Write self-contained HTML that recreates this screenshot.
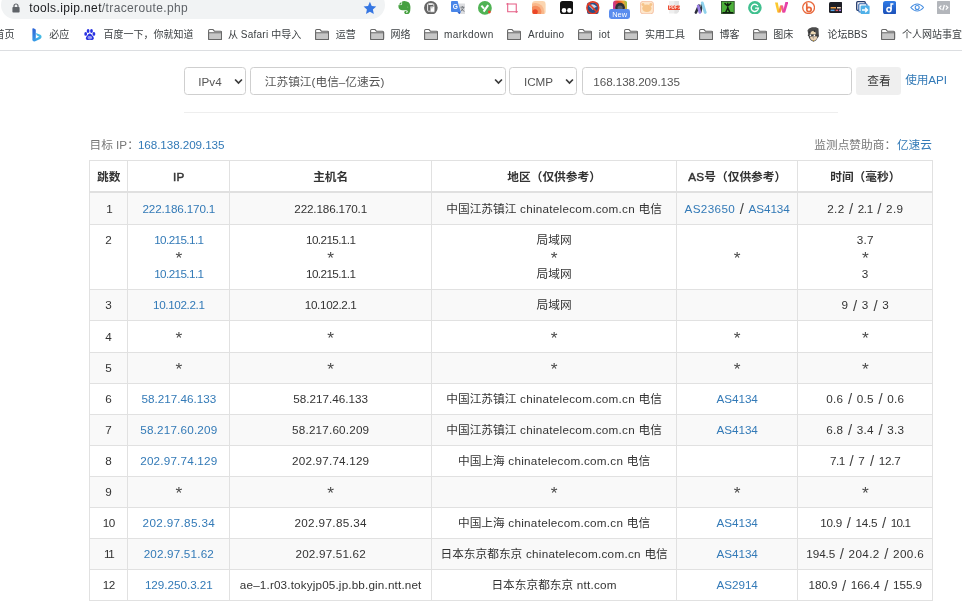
<!DOCTYPE html>
<html lang="zh-CN"><head><meta charset="utf-8"><title>Traceroute</title>
<style>
*{box-sizing:border-box;margin:0;padding:0}
html,body{width:962px;height:601px;overflow:hidden;background:#fff}
body{position:relative;will-change:transform;font-family:"Liberation Sans","Noto Sans CJK SC",sans-serif;color:#333;font-size:11.7px}
.abs{position:absolute}
a{color:#337ab7;text-decoration:none}
/* chrome */
#omni{position:absolute;left:0.6px;top:-9.4px;width:384.6px;height:28.5px;border-radius:14.25px;background:#f1f3f4}
#url{position:absolute;left:29.3px;top:-0.4px;font-size:12px;line-height:16px;color:#5f6368;white-space:nowrap;letter-spacing:0.37px}
#url b{font-weight:normal;color:#202124}
.bm{position:absolute;top:27px;height:16px;line-height:16px;font-size:10px;color:#3c4043;white-space:nowrap}
.fold{position:absolute;top:28.7px;width:14.2px;height:11.2px}
#bbar{position:absolute;left:0;top:49.6px;width:962px;height:1px;background:#dcdee1}
.ext{position:absolute;top:2px;width:15px;height:15px}
/* form */
.ctl{position:absolute;top:66.6px;height:28.4px;border:0.9px solid #cfcfcf;border-radius:3.5px;background:#fff;color:#555;font-size:11.7px;line-height:28px;white-space:nowrap}
.chev{position:absolute;top:10.2px;width:9px;height:7px}
#btn{position:absolute;left:856.3px;top:66.6px;width:45.2px;height:28.4px;border-radius:3.3px;background:#efefef;color:#333;text-align:center;line-height:27px;font-size:11.7px}
#hr{position:absolute;left:183.7px;top:112px;width:654.5px;height:1px;background:#eee}
/* table */
table{position:absolute;left:89px;top:160px;border-collapse:collapse;table-layout:fixed;width:843.4px}
td,th{border:1px solid #e1e1e1;text-align:center;vertical-align:top;font-size:11.7px;line-height:16.7px;padding:7.1px 0 0;white-space:nowrap;overflow:hidden;word-spacing:1.35px}
td.c{word-spacing:0.35px}
th{padding-top:7.9px}
th i{font-style:normal;font-weight:normal;-webkit-text-stroke:0.45px #333;letter-spacing:0.3px}
tr.f td{padding-top:8.1px}
th{font-weight:bold;border-bottom:2px solid #e0e0e0}
tr.s td{background:#f9f9f9}
.sl{font-size:14.9px;line-height:0;position:relative;top:1.2px;color:#444}
.ast{font-size:17.4px;line-height:0;position:relative;top:3px;color:#4a4a4a}
</style></head>
<body>
<div id="omni"></div>
<svg class="abs" style="left:12px;top:2.5px;width:8px;height:10px" viewBox="0 0 8 10"><path d="M2 4.2 V3 a2 2 0 0 1 4 0 V4.2" fill="none" stroke="#5f6368" stroke-width="1.2"/><rect x="0.4" y="4" width="7.2" height="5.6" rx="0.8" fill="#5f6368"/></svg>
<div id="url"><b>tools.ipip.net</b>/traceroute.php</div>
<svg class="abs" style="left:362.8px;top:0.8px;width:13.8px;height:13.8px" viewBox="0 0 24 24"><path d="M12 1.5 L15.2 8.6 L23 9.4 L17.2 14.7 L18.8 22.4 L12 18.5 L5.2 22.4 L6.8 14.7 L1 9.4 L8.8 8.6 Z" fill="#3676e2"/></svg>
<svg class="abs" style="left:397.5px;top:0.8px;width:13px;height:13.6px" viewBox="0 0 13 13.6"><path d="M6.2 0 Q8 0 8.7 0.5 Q11 1 11.6 2.5 Q12.6 5 12.4 7.5 Q12.4 10.4 11.6 11.7 Q10.6 13.4 8.7 13.3 Q6.4 13.2 6.2 11.6 Q6.1 10.4 7.4 10 Q8.6 9.8 9 10.7 Q8.4 10.5 8 10.9 Q7.7 11.5 8.5 11.7 Q9.8 11.7 9.8 10.2 Q9.6 9.2 7.6 9.2 Q6.6 9.3 5.75 9.2 Q3 9.6 1.6 8.3 Q0.3 7 0.3 4.2 L3.2 4.1 Q4.1 4 4.1 3 L4.1 0.6 Q5 0 6.2 0 Z" fill="#46a040"/><path d="M0.7 3.5 L3.4 0.8 L3.4 2.9 Q3.4 3.5 2.8 3.5 Z" fill="#46a040"/><path d="M9 5.9 Q9.8 5.5 10.4 6.3 Q9.6 6.5 9 5.9Z" fill="#cfe8cc"/></svg>
<svg class="abs" style="left:424px;top:0.7px;width:13.7px;height:13.7px" viewBox="0 0 13.7 13.7"><circle cx="6.85" cy="6.85" r="6.85" fill="#666"/><rect x="3.6" y="3" width="6.2" height="7.2" rx="0.7" fill="none" stroke="#fff" stroke-width="0.9"/><rect x="4.8" y="2.4" width="3.8" height="1.3" rx="0.3" fill="#fff"/><rect x="6.2" y="5.3" width="4.5" height="5.9" rx="0.4" fill="#fff" stroke="#666" stroke-width="0.5"/><path d="M7.2 6.8 H8.6" stroke="#666" stroke-width="0.6"/></svg>
<svg class="abs" style="left:450.8px;top:0.9px;width:14.4px;height:13.6px" viewBox="0 0 14.4 13.6"><rect x="7.6" y="2.6" width="6.6" height="10.4" rx="0.8" fill="#dcdde0"/><path d="M9.4 6.2 H13.4 M11.4 5.2 V6.2 M12.8 6.2 Q12 9 9.6 10.4 M10.2 7.4 Q11.2 9.4 13.4 10.4" stroke="#5f6368" stroke-width="0.8" fill="none"/><path d="M1 0 H6.6 L9.8 11 H1 Q0 11 0 10 V1 Q0 0 1 0 Z" fill="#4a86e8"/><path d="M6.4 11 L8.4 13.4 L9.8 11 Z" fill="#2f62c9"/><text x="1.7" y="8" font-family="Liberation Sans,sans-serif" font-weight="bold" font-size="6.6" fill="#fff">G</text></svg>
<svg class="abs" style="left:478.3px;top:0.8px;width:13.8px;height:13.8px" viewBox="0 0 13.8 13.8"><circle cx="6.9" cy="6.9" r="6.9" fill="#50b354"/><path d="M3.4 4.6 L6 7.6 M10.2 4.2 L5.6 10.6" stroke="#fff" stroke-width="2.1" fill="none"/><circle cx="11.4" cy="11" r="1.4" fill="#e8452c"/></svg>
<svg class="abs" style="left:506px;top:1.5px;width:12px;height:12px" viewBox="0 0 12 12"><path d="M1.7 0.9 V9.75 H11.9 M0.25 2 H10.25 V11" stroke="#e55c84" stroke-width="1.05" fill="none"/></svg>
<svg class="abs" style="left:532px;top:0.8px;width:13.8px;height:13.6px" viewBox="0 0 13.8 13.6"><defs><clipPath id="oc"><rect width="13.8" height="13.6" rx="3.4"/></clipPath></defs><g clip-path="url(#oc)"><rect width="13.8" height="13.6" fill="#fbd5b0"/><circle cx="3.6" cy="10.6" r="8.6" fill="#f9b88c"/><circle cx="3.6" cy="10.6" r="5.8" fill="#f58e5e"/><circle cx="3.2" cy="10.8" r="2.6" fill="#ea4628"/></g></svg>
<svg class="abs" style="left:559.5px;top:1.2px;width:13.4px;height:13.2px" viewBox="0 0 13.4 13.2"><rect width="13.4" height="13.2" rx="2.6" fill="#111"/><circle cx="4" cy="9.4" r="2.3" fill="#fff"/><circle cx="9.4" cy="9.4" r="2.3" fill="#fff"/></svg>
<svg class="abs" style="left:586px;top:0.8px;width:13.6px;height:13.6px" viewBox="0 0 13.6 13.6"><rect x="1" y="1.6" width="11.6" height="11.4" rx="2" fill="#2b4f86"/><path d="M3 5 Q7 1 11 6 Q8 6 7 9 Q5 7 3 5Z" fill="#c9d6ea"/><circle cx="6.8" cy="6.8" r="5.9" fill="none" stroke="#e23b24" stroke-width="1.6"/><path d="M2.6 2.6 L11 11" stroke="#e23b24" stroke-width="1.6"/></svg>
<svg class="abs" style="left:613.3px;top:0px;width:14.2px;height:10px" viewBox="0 0 14.2 10"><defs><linearGradient id="ig" x1="0" y1="0.7" x2="1" y2="0.5"><stop offset="0" stop-color="#c23ab8"/><stop offset="0.45" stop-color="#e8402a"/><stop offset="0.8" stop-color="#f0a030"/><stop offset="1" stop-color="#9ac04a"/></linearGradient></defs><rect x="0" y="0.4" width="14.2" height="13" rx="3" fill="url(#ig)"/><circle cx="7.1" cy="7.6" r="4.8" fill="#2e3138"/><circle cx="7.1" cy="8" r="2.6" fill="#5a5f68"/></svg>
<div class="abs" style="left:609.1px;top:8.9px;width:21px;height:10px;border-radius:2.4px;background:#5a8dee;color:#fff;font-size:7.4px;line-height:11.4px;text-align:center">New</div>
<svg class="abs" style="left:640px;top:1px;width:13.8px;height:13.2px" viewBox="0 0 13.8 13.2"><rect x="0.4" y="0.4" width="13" height="12.4" rx="2.6" fill="#fde7cd" stroke="#f4b99a" stroke-width="0.8"/><ellipse cx="6.9" cy="7.2" rx="4.6" ry="3.8" fill="#f6c48a"/><circle cx="3" cy="3.4" r="1.5" fill="#f6c48a"/><circle cx="10.8" cy="3.4" r="1.5" fill="#f6c48a"/></svg>
<svg class="abs" style="left:667.6px;top:0.8px;width:12.6px;height:12.8px" viewBox="0 0 12.6 12.8"><path d="M1 0 H11 V10.6 L9 12.6 H1 Z" fill="#efefef"/><path d="M6.4 0 H11 V10.6 L9 12.6 H6.4 Z" fill="#e3e3e3"/><rect x="0" y="4.2" width="12.6" height="4.9" rx="0.8" fill="#ea4a30"/><text x="0.7" y="8.3" font-family="Liberation Sans,sans-serif" font-weight="bold" font-size="4.6" fill="#fde3dc" letter-spacing="-0.2">PDF 2U</text></svg>
<svg class="abs" style="left:694.2px;top:0.7px;width:14px;height:13.4px" viewBox="0 0 14 13.4"><path d="M1.9 11.6 L5 4.6" stroke="#2b2d3a" stroke-width="2.6" stroke-linecap="round"/><path d="M6.4 10.8 L8 3.6" stroke="#2b2d3a" stroke-width="2.4" stroke-linecap="round"/><path d="M4.2 5 L5.9 11.4" stroke="#9a80e4" stroke-width="2.8" stroke-linecap="round"/><path d="M8.3 2 L11.2 11.4" stroke="#8fd2ec" stroke-width="2.9" stroke-linecap="round"/></svg>
<svg class="abs" style="left:721px;top:1.2px;width:13.6px;height:12.8px" viewBox="0 0 13.6 12.8"><rect x="0.4" y="0.4" width="12.8" height="12" fill="#4cb03a" stroke="#2d4f2a" stroke-width="0.9"/><path d="M6.8 2.2 L6.8 7 M4 2.6 L6.8 5 L9.8 2.2 M6.8 7 L4.6 11.6 M6.8 7 L9 11.6 M2 11.8 H11.6" stroke="#10200f" stroke-width="1.5" fill="none" stroke-linecap="round"/></svg>
<svg class="abs" style="left:748px;top:0.8px;width:13.8px;height:13.6px" viewBox="0 0 13.8 13.6"><circle cx="6.9" cy="6.8" r="6.8" fill="#40c08f"/><path d="M9.6 4.6 A3.6 3.6 0 1 0 10.4 7.2 H7.6" stroke="#fff" stroke-width="1.35" fill="none" stroke-linecap="round"/></svg>
<svg class="abs" style="left:775px;top:2px;width:13.4px;height:11px" viewBox="0 0 13.4 11"><path d="M0 0.6 H2.8 L4.6 10.6 H2.4 Z" fill="#fbc92e"/><path d="M5 3.4 H7.6 L5.6 10.6 H3.2 Z" fill="#f7953a"/><path d="M5.6 3.4 H8 L9.6 10.6 H7.2 Z" fill="#f25d8f"/><path d="M10.4 0 H13.4 L10.2 10.6 H7.8 Z" fill="#e640a8"/></svg>
<svg class="abs" style="left:802px;top:1px;width:13.2px;height:13.2px" viewBox="0 0 13.2 13.2"><circle cx="6.6" cy="6.6" r="5.9" fill="#fff" stroke="#e8683c" stroke-width="1.3"/><path d="M4.8 2.8 V8.4 Q4.8 10.6 7 10.6 Q9.2 10.6 9.2 8.4 Q9.2 6.4 7 6.4 Q5.6 6.4 4.9 7.4" stroke="#e8683c" stroke-width="1.7" fill="none" stroke-linecap="round"/></svg>
<svg class="abs" style="left:828.8px;top:2px;width:13.6px;height:11px" viewBox="0 0 13.6 11"><rect width="13.6" height="11" rx="1.6" fill="#1d1e25"/><rect x="1.6" y="5" width="5.4" height="1.5" fill="#f0a04b"/><rect x="8" y="5" width="3.8" height="1.5" fill="#f0d9c0"/><rect x="1.6" y="7.6" width="4" height="1.5" fill="#58a6e8"/><rect x="6.6" y="7.6" width="2.6" height="1.5" fill="#d65a5a"/><rect x="10" y="7.6" width="2" height="1.5" fill="#a777e0"/></svg>
<svg class="abs" style="left:856.4px;top:1px;width:13.8px;height:13.4px" viewBox="0 0 13.8 13.4"><rect x="0.7" y="0.7" width="8.6" height="8.6" rx="1" fill="#fff" stroke="#243b6b" stroke-width="1.3"/><rect x="2.8" y="2.8" width="8.2" height="8.2" rx="1" fill="#fff" stroke="#2d5fa8" stroke-width="1.1"/><rect x="4.6" y="4.6" width="9" height="8.6" rx="1.2" fill="#4fb0e8"/><path d="M6 9 H11 M9.2 6.8 L11.4 9 L9.2 11.2" stroke="#fff" stroke-width="1.5" fill="none"/></svg>
<svg class="abs" style="left:883px;top:1px;width:13.4px;height:13.4px" viewBox="0 0 13.4 13.4"><defs><linearGradient id="dg" x1="0" y1="0" x2="0" y2="1"><stop offset="0" stop-color="#2f7be6"/><stop offset="1" stop-color="#1c50b8"/></linearGradient></defs><rect width="13.4" height="13.4" rx="2.6" fill="url(#dg)"/><circle cx="6" cy="8.6" r="2.1" fill="none" stroke="#fff" stroke-width="1.5"/><path d="M8.1 8.6 V3 H10.4" stroke="#fff" stroke-width="1.5" fill="none"/></svg>
<svg class="abs" style="left:909.6px;top:3.4px;width:14.4px;height:9px" viewBox="0 0 14.4 9"><path d="M0.8 4.5 Q7.2 -2.6 13.6 4.5 Q7.2 11.6 0.8 4.5 Z" fill="#fff" stroke="#4a90e2" stroke-width="1.1"/><circle cx="7.2" cy="4.5" r="2" fill="none" stroke="#4a90e2" stroke-width="1.1"/></svg>
<svg class="abs" style="left:937px;top:1px;width:13.2px;height:13.2px" viewBox="0 0 13.2 13.2"><rect width="13.2" height="13.2" rx="0.8" fill="#b3b6bb"/><path d="M4.4 4.6 L2.4 6.6 L4.4 8.6 M8.8 4.6 L10.8 6.6 L8.8 8.6 M7.4 4 L5.8 9.2" stroke="#fff" stroke-width="1.3" fill="none"/></svg>
<svg class="abs" style="left:31.5px;top:28px;width:10px;height:13.6px" viewBox="0 0 10 13.6"><defs><linearGradient id="bg1" x1="0" y1="0" x2="0" y2="1"><stop offset="0" stop-color="#2c63d6"/><stop offset="1" stop-color="#3a9be8"/></linearGradient><linearGradient id="bg2" x1="0" y1="1" x2="1" y2="0"><stop offset="0" stop-color="#2f8fe6"/><stop offset="1" stop-color="#4cc9e4"/></linearGradient></defs><path d="M3.8 5 L8.4 6.8 Q9.8 7.5 9.6 9 Q9.4 10.2 8.2 10.9 L3.2 13.3 Q1.6 13.8 0.5 12.4 L3.8 10.6 L6.6 9 Q7 8.5 6.4 8 L4.9 7.4 Z" fill="url(#bg2)"/><path d="M0.4 1 Q0.4 0 1.4 0.3 L3 0.9 Q3.8 1.2 3.8 2 V10.8 L1.8 12.8 Q0.4 13 0.4 11.6 Z" fill="url(#bg1)"/></svg>
<svg class="abs" style="left:84.2px;top:28.6px;width:11.4px;height:11.4px" viewBox="0 0 11.4 11.4"><ellipse cx="1.7" cy="4.9" rx="1.4" ry="1.9" fill="#2932e1"/><ellipse cx="4.1" cy="2" rx="1.4" ry="1.9" fill="#2932e1"/><ellipse cx="7.5" cy="2" rx="1.4" ry="1.9" fill="#2932e1"/><ellipse cx="9.9" cy="4.9" rx="1.4" ry="1.9" fill="#2932e1"/><path d="M5.8 4.6 Q7.2 4.6 8.2 6.4 Q10.2 8 9.8 9.8 Q9.4 11.2 7.6 11 Q5.8 10.6 4 11 Q2 11.2 1.8 9.6 Q1.6 8 3.4 6.4 Q4.4 4.6 5.8 4.6Z" fill="#2932e1"/><rect x="3.8" y="7.6" width="4" height="2" rx="0.6" fill="#fff"/><path d="M4.6 8 V9.2 M5.8 8 V9.2 M7 8 V9.2" stroke="#2932e1" stroke-width="0.6"/></svg>
<svg class="abs" style="left:807.1px;top:27.1px;width:12px;height:15px" viewBox="0 0 12 15"><path d="M0.5 3.2 L2 1.5 L5 0.2 H9 L11.5 1.5 L11.9 9.5 L10.6 11 L9 13.6 L6.5 14.8 L4 13.6 L2 11 L1.4 8 Z" fill="#4c4c4c"/><path d="M3.4 7.4 Q3.4 4.4 6 4 Q8.4 4.2 8.8 6 L8.6 7.4 Z" fill="#ead6b2"/><path d="M3 9.8 Q6 9 10.2 9.4 L9.8 11.2 L8.6 13 L6.6 13.9 L4.6 13 L3.4 11.4 Z" fill="#e9d2b4"/><path d="M5.4 10 L6.4 12 L7.4 10.2 Z" fill="#777" opacity="0.6"/><path d="M0.9 8.3 H11.4" stroke="#3a3a3a" stroke-width="1.5"/><circle cx="3.4" cy="8.3" r="0.85" fill="#fff"/><circle cx="7.4" cy="8.3" r="0.85" fill="#fff"/><circle cx="2.4" cy="5" r="0.6" fill="#111"/><circle cx="7.4" cy="4.2" r="0.6" fill="#111"/><rect x="5.9" y="13" width="1" height="1" fill="#b8912e"/></svg>
<div class="bm" style="left:-5.5px">首页</div>
<div class="bm" style="left:49.3px">必应</div>
<div class="bm" style="left:103.6px">百度一下，你就知道</div>
<svg class="fold" style="left:207.6px" viewBox="0 0 14.2 11.2"><path d="M0.6 1.7 Q0.6 0.6 1.7 0.6 H5 L6.4 2.2 H12.5 Q13.6 2.2 13.6 3.3 V9.5 Q13.6 10.6 12.5 10.6 H1.7 Q0.6 10.6 0.6 9.5 Z" fill="#fff" stroke="#666" stroke-width="1.05"/><path d="M0.6 3.7 H13.6 V9.5 Q13.6 10.6 12.5 10.6 H1.7 Q0.6 10.6 0.6 9.5 Z" fill="#c6c6c6" stroke="#666" stroke-width="1.05"/></svg>
<div class="bm" style="left:228px">从 <span style="letter-spacing:.25px">Safari</span> 中导入</div>
<svg class="fold" style="left:314.8px" viewBox="0 0 14.2 11.2"><path d="M0.6 1.7 Q0.6 0.6 1.7 0.6 H5 L6.4 2.2 H12.5 Q13.6 2.2 13.6 3.3 V9.5 Q13.6 10.6 12.5 10.6 H1.7 Q0.6 10.6 0.6 9.5 Z" fill="#fff" stroke="#666" stroke-width="1.05"/><path d="M0.6 3.7 H13.6 V9.5 Q13.6 10.6 12.5 10.6 H1.7 Q0.6 10.6 0.6 9.5 Z" fill="#c6c6c6" stroke="#666" stroke-width="1.05"/></svg>
<div class="bm" style="left:335.8px">运营</div>
<svg class="fold" style="left:370.4px" viewBox="0 0 14.2 11.2"><path d="M0.6 1.7 Q0.6 0.6 1.7 0.6 H5 L6.4 2.2 H12.5 Q13.6 2.2 13.6 3.3 V9.5 Q13.6 10.6 12.5 10.6 H1.7 Q0.6 10.6 0.6 9.5 Z" fill="#fff" stroke="#666" stroke-width="1.05"/><path d="M0.6 3.7 H13.6 V9.5 Q13.6 10.6 12.5 10.6 H1.7 Q0.6 10.6 0.6 9.5 Z" fill="#c6c6c6" stroke="#666" stroke-width="1.05"/></svg>
<div class="bm" style="left:390.6px">网络</div>
<svg class="fold" style="left:423.8px" viewBox="0 0 14.2 11.2"><path d="M0.6 1.7 Q0.6 0.6 1.7 0.6 H5 L6.4 2.2 H12.5 Q13.6 2.2 13.6 3.3 V9.5 Q13.6 10.6 12.5 10.6 H1.7 Q0.6 10.6 0.6 9.5 Z" fill="#fff" stroke="#666" stroke-width="1.05"/><path d="M0.6 3.7 H13.6 V9.5 Q13.6 10.6 12.5 10.6 H1.7 Q0.6 10.6 0.6 9.5 Z" fill="#c6c6c6" stroke="#666" stroke-width="1.05"/></svg>
<div class="bm" style="left:444px"><span style="letter-spacing:.45px">markdown</span></div>
<svg class="fold" style="left:507.1px" viewBox="0 0 14.2 11.2"><path d="M0.6 1.7 Q0.6 0.6 1.7 0.6 H5 L6.4 2.2 H12.5 Q13.6 2.2 13.6 3.3 V9.5 Q13.6 10.6 12.5 10.6 H1.7 Q0.6 10.6 0.6 9.5 Z" fill="#fff" stroke="#666" stroke-width="1.05"/><path d="M0.6 3.7 H13.6 V9.5 Q13.6 10.6 12.5 10.6 H1.7 Q0.6 10.6 0.6 9.5 Z" fill="#c6c6c6" stroke="#666" stroke-width="1.05"/></svg>
<div class="bm" style="left:528px"><span style="letter-spacing:.28px">Arduino</span></div>
<svg class="fold" style="left:578.3px" viewBox="0 0 14.2 11.2"><path d="M0.6 1.7 Q0.6 0.6 1.7 0.6 H5 L6.4 2.2 H12.5 Q13.6 2.2 13.6 3.3 V9.5 Q13.6 10.6 12.5 10.6 H1.7 Q0.6 10.6 0.6 9.5 Z" fill="#fff" stroke="#666" stroke-width="1.05"/><path d="M0.6 3.7 H13.6 V9.5 Q13.6 10.6 12.5 10.6 H1.7 Q0.6 10.6 0.6 9.5 Z" fill="#c6c6c6" stroke="#666" stroke-width="1.05"/></svg>
<div class="bm" style="left:598.8px"><span style="letter-spacing:.2px">iot</span></div>
<svg class="fold" style="left:624.2px" viewBox="0 0 14.2 11.2"><path d="M0.6 1.7 Q0.6 0.6 1.7 0.6 H5 L6.4 2.2 H12.5 Q13.6 2.2 13.6 3.3 V9.5 Q13.6 10.6 12.5 10.6 H1.7 Q0.6 10.6 0.6 9.5 Z" fill="#fff" stroke="#666" stroke-width="1.05"/><path d="M0.6 3.7 H13.6 V9.5 Q13.6 10.6 12.5 10.6 H1.7 Q0.6 10.6 0.6 9.5 Z" fill="#c6c6c6" stroke="#666" stroke-width="1.05"/></svg>
<div class="bm" style="left:645px">实用工具</div>
<svg class="fold" style="left:699.0px" viewBox="0 0 14.2 11.2"><path d="M0.6 1.7 Q0.6 0.6 1.7 0.6 H5 L6.4 2.2 H12.5 Q13.6 2.2 13.6 3.3 V9.5 Q13.6 10.6 12.5 10.6 H1.7 Q0.6 10.6 0.6 9.5 Z" fill="#fff" stroke="#666" stroke-width="1.05"/><path d="M0.6 3.7 H13.6 V9.5 Q13.6 10.6 12.5 10.6 H1.7 Q0.6 10.6 0.6 9.5 Z" fill="#c6c6c6" stroke="#666" stroke-width="1.05"/></svg>
<div class="bm" style="left:719.6px">博客</div>
<svg class="fold" style="left:752.6px" viewBox="0 0 14.2 11.2"><path d="M0.6 1.7 Q0.6 0.6 1.7 0.6 H5 L6.4 2.2 H12.5 Q13.6 2.2 13.6 3.3 V9.5 Q13.6 10.6 12.5 10.6 H1.7 Q0.6 10.6 0.6 9.5 Z" fill="#fff" stroke="#666" stroke-width="1.05"/><path d="M0.6 3.7 H13.6 V9.5 Q13.6 10.6 12.5 10.6 H1.7 Q0.6 10.6 0.6 9.5 Z" fill="#c6c6c6" stroke="#666" stroke-width="1.05"/></svg>
<div class="bm" style="left:773.2px">图床</div>
<svg class="fold" style="left:881.4px" viewBox="0 0 14.2 11.2"><path d="M0.6 1.7 Q0.6 0.6 1.7 0.6 H5 L6.4 2.2 H12.5 Q13.6 2.2 13.6 3.3 V9.5 Q13.6 10.6 12.5 10.6 H1.7 Q0.6 10.6 0.6 9.5 Z" fill="#fff" stroke="#666" stroke-width="1.05"/><path d="M0.6 3.7 H13.6 V9.5 Q13.6 10.6 12.5 10.6 H1.7 Q0.6 10.6 0.6 9.5 Z" fill="#c6c6c6" stroke="#666" stroke-width="1.05"/></svg>
<div class="bm" style="left:902px">个人网站事宜</div>
<div class="bm" style="left:827.4px">论坛BBS</div>
<div id="bbar"></div>
<div class="ctl" style="left:183.7px;width:62px;padding-left:13.6px">IPv4<svg class="chev" style="left:49.5px" viewBox="0 0 9 7"><path d="M1.1 1.5 L4.5 5 L7.9 1.5" fill="none" stroke="#3a3a3a" stroke-width="1.7"/></svg></div>
<div class="ctl" style="left:250.3px;width:255.3px;padding-left:13.5px">江苏镇江(电信–亿速云)<svg class="chev" style="left:242.5px" viewBox="0 0 9 7"><path d="M1.1 1.5 L4.5 5 L7.9 1.5" fill="none" stroke="#3a3a3a" stroke-width="1.7"/></svg></div>
<div class="ctl" style="left:509.3px;width:68px;padding-left:13.6px">ICMP<svg class="chev" style="left:55px" viewBox="0 0 9 7"><path d="M1.1 1.5 L4.5 5 L7.9 1.5" fill="none" stroke="#3a3a3a" stroke-width="1.7"/></svg></div>
<div class="ctl" style="left:582px;width:269.8px;padding-left:10.3px"><span style="letter-spacing:-0.08px">168.138.209.135</span></div>
<div id="btn">查看</div>
<a class="abs" style="left:905.2px;top:70.7px;font-size:11.7px;line-height:17px;letter-spacing:-0.1px">使用API</a>
<div id="hr"></div>
<div class="abs" style="left:89.5px;top:136.2px;line-height:17px;color:#777;white-space:nowrap">目标 IP：</div>
<a class="abs" style="left:137.9px;top:136.2px;line-height:17px;white-space:nowrap"><span style="letter-spacing:-0.08px">168.138.209.135</span></a>
<div class="abs" style="right:30px;top:136.2px;line-height:17px;color:#777;white-space:nowrap">监测点赞助商：<a style="margin-left:0.8px">亿速云</a></div>
<table><colgroup><col style="width:38.4px"><col style="width:101.9px"><col style="width:201.8px"><col style="width:245.1px"><col style="width:121px"><col style="width:135.2px"></colgroup>
<tr style="height:31px"><th>跳数</th><th><i>IP</i></th><th>主机名</th><th>地区（仅供参考）</th><th><i>AS</i>号（仅供参考）</th><th>时间（毫秒）</th></tr>
<tr class="s f" style="height:33.2px"><td><span style="letter-spacing:-1.81px">1</span></td><td><a><span style="letter-spacing:-0.16px">222.186.170.1</span></a></td><td><span style="letter-spacing:-0.16px">222.186.170.1</span></td><td class=c>中国江苏镇江 <span style="letter-spacing:0.27px">chinatelecom.com.cn</span> 电信</td><td><a><span style="letter-spacing:0.35px">AS23650</span></a> <span class="sl">/</span> <a><span style="letter-spacing:-0.05px">AS4134</span></a></td><td><span style="letter-spacing:0.31px">2.2</span> <span class="sl">/</span> <span style="letter-spacing:-0.45px">2.1</span> <span class="sl">/</span> <span style="letter-spacing:0.31px">2.9</span></td></tr>
<tr style="height:65.2px"><td><span style="letter-spacing:0.49px">2</span></td><td><a><span style="letter-spacing:-0.59px">10.215.1.1</span></a><br><span class="ast">*</span><br><a><span style="letter-spacing:-0.59px">10.215.1.1</span></a></td><td><span style="letter-spacing:-0.59px">10.215.1.1</span><br><span class="ast">*</span><br><span style="letter-spacing:-0.59px">10.215.1.1</span></td><td>局域网<br><span class="ast">*</span><br>局域网</td><td><div style="padding-top:16.3px"><span class="ast">*</span></div></td><td><span style="letter-spacing:0.31px">3.7</span><br><span class="ast">*</span><br><span style="letter-spacing:0.49px">3</span></td></tr>
<tr class="s" style="height:31.1px"><td><span style="letter-spacing:0.49px">3</span></td><td><a><span style="letter-spacing:-0.36px">10.102.2.1</span></a></td><td><span style="letter-spacing:-0.36px">10.102.2.1</span></td><td>局域网</td><td></td><td><span style="letter-spacing:0.49px">9</span> <span class="sl">/</span> <span style="letter-spacing:0.49px">3</span> <span class="sl">/</span> <span style="letter-spacing:0.49px">3</span></td></tr>
<tr style="height:31.1px"><td><span style="letter-spacing:0.49px">4</span></td><td><span class="ast">*</span></td><td><span class="ast">*</span></td><td><span class="ast">*</span></td><td><span class="ast">*</span></td><td><span class="ast">*</span></td></tr>
<tr class="s" style="height:31.1px"><td><span style="letter-spacing:0.49px">5</span></td><td><span class="ast">*</span></td><td><span class="ast">*</span></td><td><span class="ast">*</span></td><td><span class="ast">*</span></td><td><span class="ast">*</span></td></tr>
<tr style="height:31.1px"><td><span style="letter-spacing:0.49px">6</span></td><td><a>58.217.46.133</a></td><td>58.217.46.133</td><td class=c>中国江苏镇江 <span style="letter-spacing:0.27px">chinatelecom.com.cn</span> 电信</td><td><a><span style="letter-spacing:-0.05px">AS4134</span></a></td><td><span style="letter-spacing:0.31px">0.6</span> <span class="sl">/</span> <span style="letter-spacing:0.31px">0.5</span> <span class="sl">/</span> <span style="letter-spacing:0.31px">0.6</span></td></tr>
<tr class="s" style="height:31.1px"><td><span style="letter-spacing:0.49px">7</span></td><td><a><span style="letter-spacing:0.19px">58.217.60.209</span></a></td><td><span style="letter-spacing:0.19px">58.217.60.209</span></td><td class=c>中国江苏镇江 <span style="letter-spacing:0.27px">chinatelecom.com.cn</span> 电信</td><td><a><span style="letter-spacing:-0.05px">AS4134</span></a></td><td><span style="letter-spacing:0.31px">6.8</span> <span class="sl">/</span> <span style="letter-spacing:0.31px">3.4</span> <span class="sl">/</span> <span style="letter-spacing:0.31px">3.3</span></td></tr>
<tr style="height:31.1px"><td><span style="letter-spacing:0.49px">8</span></td><td><a><span style="letter-spacing:0.19px">202.97.74.129</span></a></td><td><span style="letter-spacing:0.19px">202.97.74.129</span></td><td class=c>中国上海 <span style="letter-spacing:0.27px">chinatelecom.com.cn</span> 电信</td><td></td><td><span style="letter-spacing:-0.45px">7.1</span> <span class="sl">/</span> <span style="letter-spacing:0.49px">7</span> <span class="sl">/</span> <span style="letter-spacing:-0.22px">12.7</span></td></tr>
<tr class="s" style="height:31.1px"><td><span style="letter-spacing:0.49px">9</span></td><td><span class="ast">*</span></td><td><span class="ast">*</span></td><td><span class="ast">*</span></td><td><span class="ast">*</span></td><td><span class="ast">*</span></td></tr>
<tr style="height:31.1px"><td><span style="letter-spacing:-0.66px">10</span></td><td><a><span style="letter-spacing:0.36px">202.97.85.34</span></a></td><td><span style="letter-spacing:0.36px">202.97.85.34</span></td><td class=c>中国上海 <span style="letter-spacing:0.27px">chinatelecom.com.cn</span> 电信</td><td><a><span style="letter-spacing:-0.05px">AS4134</span></a></td><td><span style="letter-spacing:-0.22px">10.9</span> <span class="sl">/</span> <span style="letter-spacing:-0.22px">14.5</span> <span class="sl">/</span> <span style="letter-spacing:-0.79px">10.1</span></td></tr>
<tr class="s" style="height:31.1px"><td><span style="letter-spacing:-1.37px">11</span></td><td><a><span style="letter-spacing:0.17px">202.97.51.62</span></a></td><td><span style="letter-spacing:0.17px">202.97.51.62</span></td><td class=c>日本东京都东京 <span style="letter-spacing:0.27px">chinatelecom.com.cn</span> 电信</td><td><a><span style="letter-spacing:-0.05px">AS4134</span></a></td><td><span style="letter-spacing:-0.08px">194.5</span> <span class="sl">/</span> <span style="letter-spacing:0.38px">204.2</span> <span class="sl">/</span> <span style="letter-spacing:0.38px">200.6</span></td></tr>
<tr style="height:31.1px"><td><span style="letter-spacing:-0.66px">12</span></td><td><a><span style="letter-spacing:-0.03px">129.250.3.21</span></a></td><td><span style="letter-spacing:0.16px">ae–1.r03.tokyjp05.jp.bb.gin.ntt.net</span></td><td class=c>日本东京都东京 <span style="letter-spacing:0.24px">ntt.com</span></td><td><a><span style="letter-spacing:-0.05px">AS2914</span></a></td><td><span style="letter-spacing:-0.08px">180.9</span> <span class="sl">/</span> <span style="letter-spacing:-0.08px">166.4</span> <span class="sl">/</span> <span style="letter-spacing:-0.08px">155.9</span></td></tr>
</table>
</body></html>
